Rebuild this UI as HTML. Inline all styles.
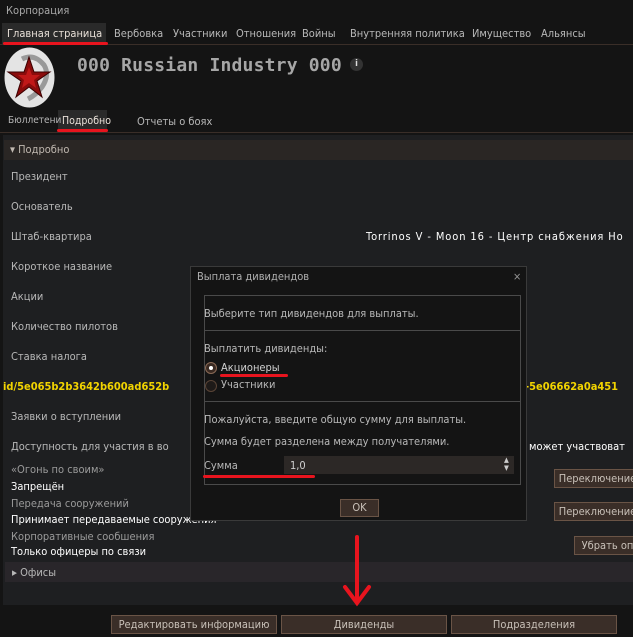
<!DOCTYPE html>
<html><head><meta charset="utf-8"><style>
body{margin:0;width:633px;height:637px;background:#141414;position:relative;overflow:hidden;font-family:"DejaVu Sans Condensed","Liberation Sans",sans-serif;font-size:11px;color:#b8b8b8;}
.a{position:absolute;white-space:nowrap;}
.w{color:#fff;}
.y{color:#f2d400;font-weight:bold;}
.btn{position:absolute;background:#3a2e28;border:1px solid #6a5446;color:#c8c0b8;text-align:center;line-height:17px;height:17px;box-sizing:content-box;}
.red{position:absolute;background:#e8141e;height:3px;border-radius:2px;}
</style></head><body>
<div class="a" style="left:6px;top:4px;color:#a8a8a8">Корпорация</div>
<div class="a" style="left:2px;top:23px;width:104px;height:21px;background:#2a2a2a"></div>
<div class="a" style="left:0;top:44px;width:633px;height:1px;background:#3a2e28"></div>
<div class="a w" style="left:7px;top:27px;color:#e8e0d8">Главная страница</div>
<div class="a" style="left:114px;top:27px">Вербовка</div>
<div class="a" style="left:173px;top:27px">Участники</div>
<div class="a" style="left:236px;top:27px">Отношения</div>
<div class="a" style="left:302px;top:27px">Войны</div>
<div class="a" style="left:350px;top:27px">Внутренняя политика</div>
<div class="a" style="left:472px;top:27px">Имущество</div>
<div class="a" style="left:541px;top:27px">Альянсы</div>
<div class="red" style="left:3px;top:42px;width:105px"></div>
<svg class="a" style="left:4px;top:47px" width="51" height="61"><ellipse cx="25.5" cy="30.5" rx="25" ry="30" fill="#e4e4e4"/><path d="M18 12 q12-6 22 6 q6 10-2 22 q-6 8-14 12" stroke="#999" stroke-width="5" fill="none"/><polygon points="25,10 30,25 46,25 33,34 38,50 25,40 12,50 17,34 4,25 20,25" fill="#8a0c0c" stroke="#3a0000"/><polygon points="25,20 28,28 36,28 30,33 32,41 25,36 18,41 20,33 14,28 22,28" fill="#c01818"/></svg>
<div class="a" style="left:77px;top:55px;font-family:'DejaVu Sans Mono',monospace;font-weight:bold;font-size:18px;letter-spacing:0.2px;color:#a6a6a6">000 Russian Industry 000</div>
<div class="a" style="left:350px;top:58px;width:13px;height:13px;border-radius:7px;background:#333;color:#ddd;font-size:9px;text-align:center;line-height:13px;font-weight:bold">i</div>
<div class="a" style="left:58px;top:110px;width:49px;height:21px;background:#2a2a2a"></div>
<div class="a" style="left:0;top:132px;width:633px;height:1px;background:#3a2e28"></div>
<div class="a" style="left:8px;top:115px;font-size:10px">Бюллетени</div>
<div class="a" style="left:62px;top:115px;color:#e8e0d8;font-size:10.5px">Подробно</div>
<div class="a" style="left:137px;top:115px">Отчеты о боях</div>
<div class="red" style="left:57px;top:129px;width:51px"></div>
<div class="a" style="left:3px;top:135px;width:630px;height:470px;background:#1e1f21"></div>
<div class="a" style="left:4px;top:140px;width:629px;height:20px;background:#2a2624"></div>
<div class="a" style="left:10px;top:143px;color:#c0b8b0">▾ Подробно</div>
<div class="a" style="left:11px;top:170px">Президент</div>
<div class="a" style="left:11px;top:200px">Основатель</div>
<div class="a" style="left:11px;top:230px">Штаб-квартира</div>
<div class="a w" style="left:366px;top:230px;letter-spacing:0.9px">Torrinos V - Moon 16 - Центр снабжения Но</div>
<div class="a" style="left:11px;top:260px">Короткое название</div>
<div class="a" style="left:11px;top:290px">Акции</div>
<div class="a" style="left:11px;top:320px">Количество пилотов</div>
<div class="a" style="left:11px;top:350px">Ставка налога</div>
<div class="a y" style="left:3px;top:380px">id/5e065b2b3642b600ad652b</div>
<div class="a y" style="left:525px;top:380px">-5e06662a0a451</div>
<div class="a" style="left:11px;top:410px">Заявки о вступлении</div>
<div class="a" style="left:11px;top:440px">Доступность для участия в во</div>
<div class="a w" style="left:529px;top:440px">может участвоват</div>
<div class="a" style="left:11px;top:463px;color:#9a9a9a">«Огонь по своим»</div>
<div class="a w" style="left:11px;top:480px">Запрещён</div>
<div class="a" style="left:11px;top:497px;color:#9a9a9a">Передача сооружений</div>
<div class="a w" style="left:11px;top:513px">Принимает передаваемые сооружения</div>
<div class="a" style="left:11px;top:530px;color:#9a9a9a">Корпоративные сообшения</div>
<div class="a w" style="left:11px;top:545px">Только офицеры по связи</div>
<div class="btn" style="left:554px;top:469px;width:85px">Переключение</div>
<div class="btn" style="left:554px;top:502px;width:85px">Переключение</div>
<div class="btn" style="left:574px;top:536px;width:65px">Убрать оп</div>
<div class="a" style="left:5px;top:562px;width:628px;height:20px;background:#29262a"></div>
<div class="a" style="left:12px;top:566px">▸ Офисы</div>
<div class="btn" style="left:111px;top:615px;width:164px">Редактировать информацию</div>
<div class="btn" style="left:281px;top:615px;width:164px">Дивиденды</div>
<div class="btn" style="left:451px;top:615px;width:164px">Подразделения</div>
<svg class="a" style="left:340px;top:535px" width="34" height="72"><path d="M17 2 V68 M5 52 L17 68 L29 52" stroke="#e8141e" stroke-width="4" fill="none" stroke-linecap="round"/></svg>
<div class="a" style="left:190px;top:266px;width:337px;height:255px;background:#141414;border:1px solid #3a3a3a;box-sizing:border-box"></div>
<div class="a" style="left:197px;top:270px;color:#b0b0b0">Выплата дивидендов</div>
<div class="a" style="left:513px;top:270px;color:#999">×</div>
<div class="a" style="left:204px;top:295px;width:317px;height:190px;border:1px solid #4a4a4a;box-sizing:border-box"></div>
<div class="a" style="left:205px;top:330px;width:315px;height:1px;background:#4a4a4a"></div>
<div class="a" style="left:205px;top:401px;width:315px;height:1px;background:#4a4a4a"></div>
<div class="a" style="left:204px;top:307px">Выберите тип дивидендов для выплаты.</div>
<div class="a" style="left:204px;top:342px">Выплатить дивиденды:</div>
<div class="a" style="left:205px;top:362px;width:10px;height:10px;border-radius:6px;border:1px solid #8a6a56;background:#3a2a22"></div>
<div class="a" style="left:209px;top:366px;width:4px;height:4px;border-radius:2px;background:#fff"></div>
<div class="a" style="left:221px;top:361px;color:#d0d0d0">Акционеры</div>
<div class="red" style="left:220px;top:374px;width:68px"></div>
<div class="a" style="left:205px;top:380px;width:10px;height:10px;border-radius:6px;border:1px solid #5a4436;background:#1e1a18"></div>
<div class="a" style="left:221px;top:378px">Участники</div>
<div class="a" style="left:204px;top:413px">Пожалуйста, введите общую сумму для выплаты.</div>
<div class="a" style="left:204px;top:435px">Сумма будет разделена между получателями.</div>
<div class="a" style="left:204px;top:459px">Сумма</div>
<div class="a" style="left:284px;top:456px;width:230px;height:18px;background:#2c2826"></div>
<div class="a" style="left:290px;top:459px;color:#d0d0d0">1,0</div>
<div class="a" style="left:504px;top:456px;font-size:7px;line-height:8px;color:#ccc">▲<br>▼</div>
<div class="red" style="left:203px;top:475px;width:112px"></div>
<div class="btn" style="left:340px;top:499px;width:37px;height:16px;line-height:16px">OK</div>
</body></html>
